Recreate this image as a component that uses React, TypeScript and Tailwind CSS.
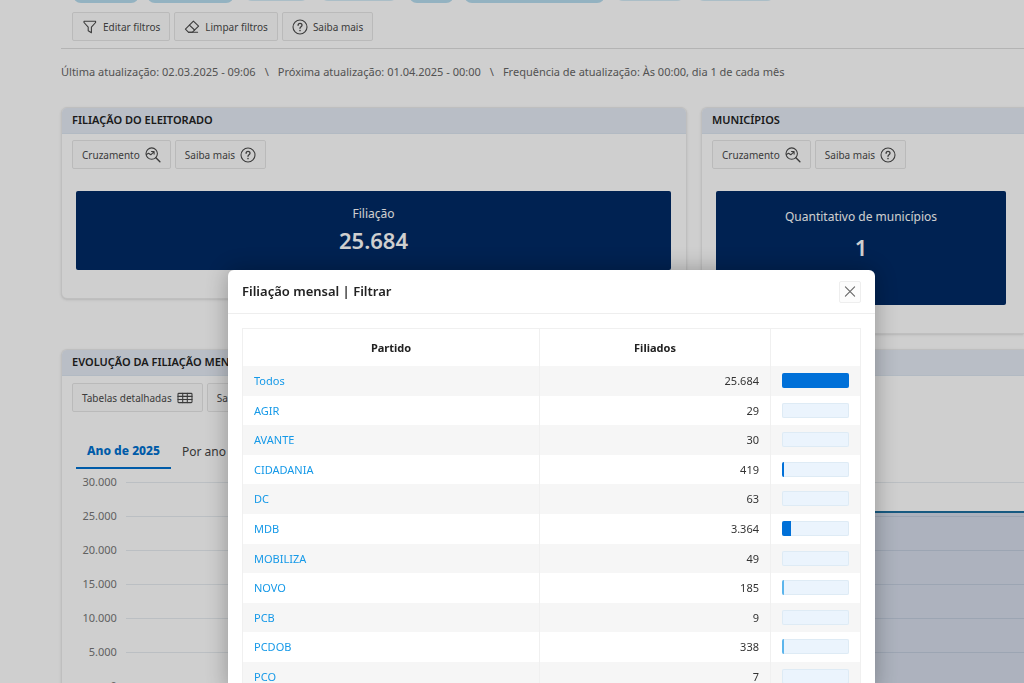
import type {ReactNode} from 'react';
import clsx from 'clsx';

const chips = [
  { width: 'w-[66px]', active: true, gap: 'mr-2' },
  { width: 'w-[87px]', active: true, gap: 'mr-[10px]' },
  { width: 'w-[65px]', active: false, gap: 'mr-[11px]' },
  { width: 'w-[78px]', active: false, gap: 'mr-[11px]' },
  { width: 'w-[45px]', active: true, gap: 'mr-[10px]' },
  { width: 'w-[141px]', active: true, gap: 'mr-[10px]' },
  { width: 'w-[70px]', active: false, gap: 'mr-[11px]' },
  { width: 'w-[79px]', active: false, gap: '' },
];

const rows = [
  { party: 'Todos', members: 25684 },
  { party: 'AGIR', members: 29 },
  { party: 'AVANTE', members: 30 },
  { party: 'CIDADANIA', members: 419 },
  { party: 'DC', members: 63 },
  { party: 'MDB', members: 3364 },
  { party: 'MOBILIZA', members: 49 },
  { party: 'NOVO', members: 185 },
  { party: 'PCB', members: 9 },
  { party: 'PCDOB', members: 338 },
  { party: 'PCO', members: 7 },
];

const total = rows[0].members;

const ticks = ['30.000', '25.000', '20.000', '15.000', '10.000', '5.000', '0'];

// 1234 -> 1.234
const formatNumber = (n: number) => String(n).replace(/\B(?=(\d{3})+$)/g, '.');

function Icon({ children }: { children: ReactNode }) {
  return (
    <svg
      viewBox="0 0 16 16"
      className="size-4 shrink-0"
      fill="none"
      stroke="currentColor"
      strokeWidth="1.1"
      strokeLinecap="round"
      strokeLinejoin="round"
      aria-hidden="true"
    >
      {children}
    </svg>
  );
}

const FilterIcon = () => (
  <Icon>
    <path d="M2 2.3h11.6v1.2L9.4 8.2v5.6l-3.2-2V8.2L2 3.5z" />
  </Icon>
);

const EraserIcon = () => (
  <Icon>
    <path d="M9.4 2.2 14.6 7.1 8.2 13.3H4.6L1.4 10.2z" />
    <path d="M5.4 6.2l5.2 4.8M4.6 13.3h9" />
  </Icon>
);

const HelpIcon = () => (
  <Icon>
    <circle cx="8" cy="8" r="7" />
    <path d="M6.1 6.3c0-2.6 3.9-2.6 3.9-.1 0 1.5-2 1.5-2 3.1" strokeWidth="1.3" />
    <circle cx="8" cy="11.5" r=".3" fill="currentColor" />
  </Icon>
);

const CrossIcon = () => (
  <Icon>
    <circle cx="6.7" cy="6.6" r="5.7" />
    <path d="M10.9 10.8l4 4" strokeWidth="1.4" />
    <path d="M1.4 7.4l2.2-1.2 2.2 1.6 3-3M6.5 4.5h2.6v2.6" />
  </Icon>
);

const TableIcon = () => (
  <Icon>
    <rect x="1" y="3.4" width="14" height="9.2" rx=".8" />
    <path d="M1 6.4h14M1 9.5h14M5.7 3.4v9.2M10.3 3.4v9.2" />
  </Icon>
);

function ToolButton({ children }: { children: ReactNode }) {
  return (
    <button
      type="button"
      className="flex h-[29px] shrink-0 items-center gap-[5px] whitespace-nowrap rounded-xs border border-[#e6e6e6] bg-[#fcfcfc] px-[9px] pt-px text-[10px] text-[#4a4a4a]"
    >
      {children}
    </button>
  );
}

function Panel({ title, className, children }: { title: string; className?: string; children: ReactNode }) {
  return (
    <section className={clsx('min-w-0 overflow-hidden border border-[#ececec] bg-white shadow-sm', className)}>
      <h2 className="flex h-[26px] items-center whitespace-nowrap border-b border-[#dce6f0] bg-[#e4eaf4] px-[10px] text-[11px] font-semibold text-[#222]">
        {title}
      </h2>
      {children}
    </section>
  );
}

function Chart() {
  return (
    <div className="mt-[13px] flex">
      <div className="w-[50px] pr-[9px] text-right text-[11px] text-[#777]">
        {ticks.map(t => (
          <div key={t} className="h-[34px] leading-[0px]">{t}</div>
        ))}
      </div>
      <svg
        className="h-[240px] grow"
        viewBox="0 0 900 240"
        preserveAspectRatio="none"
        role="img"
        aria-label="Evolução da filiação mensal"
      >
        <rect x="150" y="30" width="750" height="176" fill="#d5dcea" />
        {ticks.map((t, i) => (
          <path key={t} d={`M0 ${i * 34 + 0.5}H900`} stroke="#1c4f6f" strokeOpacity=".11" />
        ))}
        <path d="M150 30H900" stroke="#1d6f9f" strokeWidth="2" />
      </svg>
    </div>
  );
}

function FilterDialog() {
  return (
    <div className="fixed inset-0 flex items-start justify-center overflow-hidden bg-black/19 pl-[79px] pt-[270px]">
      <div
        role="dialog"
        aria-labelledby="dialog-title"
        className="w-[647px] rounded-t-md bg-white shadow-[0_0_24px_rgba(0,0,0,0.3)]"
      >
        <div className="flex h-11 items-center justify-between border-b border-[#eee] px-[14px]">
          <h2 id="dialog-title" className="text-[13px] font-semibold text-[#222]">Filiação mensal | Filtrar</h2>
          <button
            type="button"
            aria-label="Fechar"
            className="flex size-[22px] items-center justify-center rounded-xs border border-[#eee] bg-[#fcfcfc] text-[#666]"
          >
            <Icon>
              <path d="M3.4 2.9l9.2 9.2M12.6 2.9l-9.2 9.2" />
            </Icon>
          </button>
        </div>

        <div className="px-[14px] pt-[14px]">
          <table className="w-full table-fixed border-collapse border border-[#f0f0f0] text-[11px] text-[#333]">
            <thead>
              <tr className="h-[37px] text-[#222]">
                <th className="w-[297px] border-r border-[#f0f0f0] pb-0 pt-[2px] font-bold">Partido</th>
                <th className="border-r border-[#f0f0f0] pb-0 pt-[2px] font-bold">Filiados</th>
                <th className="w-[90px]" aria-label="Proporção" />
              </tr>
            </thead>
            <tbody>
              {rows.map(row => {
                const share = (row.members / total) * 100;
                return (
                  <tr key={row.party} className="h-[30px] odd:bg-[#f6f6f6] nth-[5n+2]:h-[29px] nth-[5n+4]:h-[29px]">
                    <td className="border-r border-[#f0f0f0] px-[11px] pb-0 pt-[2px]">
                      <a href="#" className="text-[#1599e8]">{row.party}</a>
                    </td>
                    <td className="border-r border-[#f0f0f0] px-[11px] pb-0 pt-[2px] text-right">{formatNumber(row.members)}</td>
                    <td className="px-[11px] py-0">
                      <div className="h-[15px] overflow-hidden rounded-xs bg-[#ebf4fd] ring-1 ring-inset ring-[#deebf5]">
                        {share > 0.5 && (
                          <div
                            className={clsx('h-full min-w-[2px]', share > 1.5 ? 'bg-[#0070d8]' : 'bg-[#5cb5ec]')}
                            style={{ width: `${share}%` }}
                          />
                        )}
                      </div>
                    </td>
                  </tr>
                );
              })}
            </tbody>
          </table>
        </div>
      </div>
    </div>
  );
}

export default function App() {
  return (
    <div className="h-screen overflow-hidden bg-white font-['Noto_Sans','Open_Sans',sans-serif]">
      <main className="pl-[61px]">
        <div className="border-b border-[#dedede]">
          <div className="flex h-[3px] items-end pl-3">
            {chips.map((chip, i) => (
              <span
                key={i}
                className={clsx(
                  'shrink-0 rounded-lg',
                  chip.width,
                  chip.gap,
                  chip.active ? 'h-7 bg-[#b5dcee]' : 'mb-[2px] h-6 bg-[#d3ebf6]',
                )}
              />
            ))}
          </div>
          <div className="mb-[7px] mt-[9px] flex gap-1 pl-[11px]">
            <ToolButton><FilterIcon />Editar filtros</ToolButton>
            <ToolButton><EraserIcon />Limpar filtros</ToolButton>
            <ToolButton><HelpIcon />Saiba mais</ToolButton>
          </div>
        </div>

        <p className="flex h-[46px] items-center whitespace-nowrap text-[11px] text-[#666]">
          <span>Última atualização: 02.03.2025 - 09:06</span>
          <span className="px-[9px]">\</span>
          <span>Próxima atualização: 01.04.2025 - 00:00</span>
          <span className="px-[9px]">\</span>
          <span>Frequência de atualização: Às 00:00, dia 1 de cada mês</span>
        </p>

        <div className="mt-3 grid grid-cols-[626fr_323fr] items-start gap-[14px]">
          <Panel title="FILIAÇÃO DO ELEITORADO" className="rounded-md">
            <div className="flex gap-1 px-[10px] pt-[6px]">
              <ToolButton>Cruzamento<CrossIcon /></ToolButton>
              <ToolButton>Saiba mais<HelpIcon /></ToolButton>
            </div>
            <div className="mb-7 ml-[14px] mr-[15px] mt-[22px] flex h-[79px] flex-col items-center justify-center rounded-xs bg-[#002a65] pb-[2px] text-white">
              <span className="text-[12px] leading-5">Filiação</span>
              <strong className="text-[22px] font-semibold leading-8">25.684</strong>
            </div>
          </Panel>

          <Panel title="MUNICÍPIOS" className="rounded-l-md border-r-0">
            <div className="flex gap-1 px-[10px] pt-[6px]">
              <ToolButton>Cruzamento<CrossIcon /></ToolButton>
              <ToolButton>Saiba mais<HelpIcon /></ToolButton>
            </div>
            <div className="mb-7 ml-[14px] mr-[18px] mt-[22px] flex h-[114px] flex-col items-center rounded-xs bg-[#002a65] pt-4 text-white">
              <span className="text-[12px] leading-5">Quantitativo de municípios</span>
              <strong className="text-[22px] font-semibold leading-10">1</strong>
            </div>
          </Panel>
        </div>

        <Panel title="EVOLUÇÃO DA FILIAÇÃO MENSAL" className="mt-[15px] rounded-l-md border-r-0">
          <div className="flex gap-1 px-[10px] pt-[7px]">
            <ToolButton>Tabelas detalhadas<TableIcon /></ToolButton>
            <ToolButton>Saiba mais<HelpIcon /></ToolButton>
          </div>
          <div role="tablist" className="ml-[14px] mt-[22px] flex text-[12px]">
            <button type="button" role="tab" aria-selected="true" className="h-[35px] border-b-2 border-[#0070cf] px-[11px] font-extrabold text-[#0070cf]">
              Ano de 2025
            </button>
            <button type="button" role="tab" aria-selected="false" className="h-[35px] px-[11px] text-[#444]">
              Por ano
            </button>
          </div>
          <div className="pl-[14px]">
            <Chart />
          </div>
        </Panel>
      </main>

      <FilterDialog />
    </div>
  );
}
